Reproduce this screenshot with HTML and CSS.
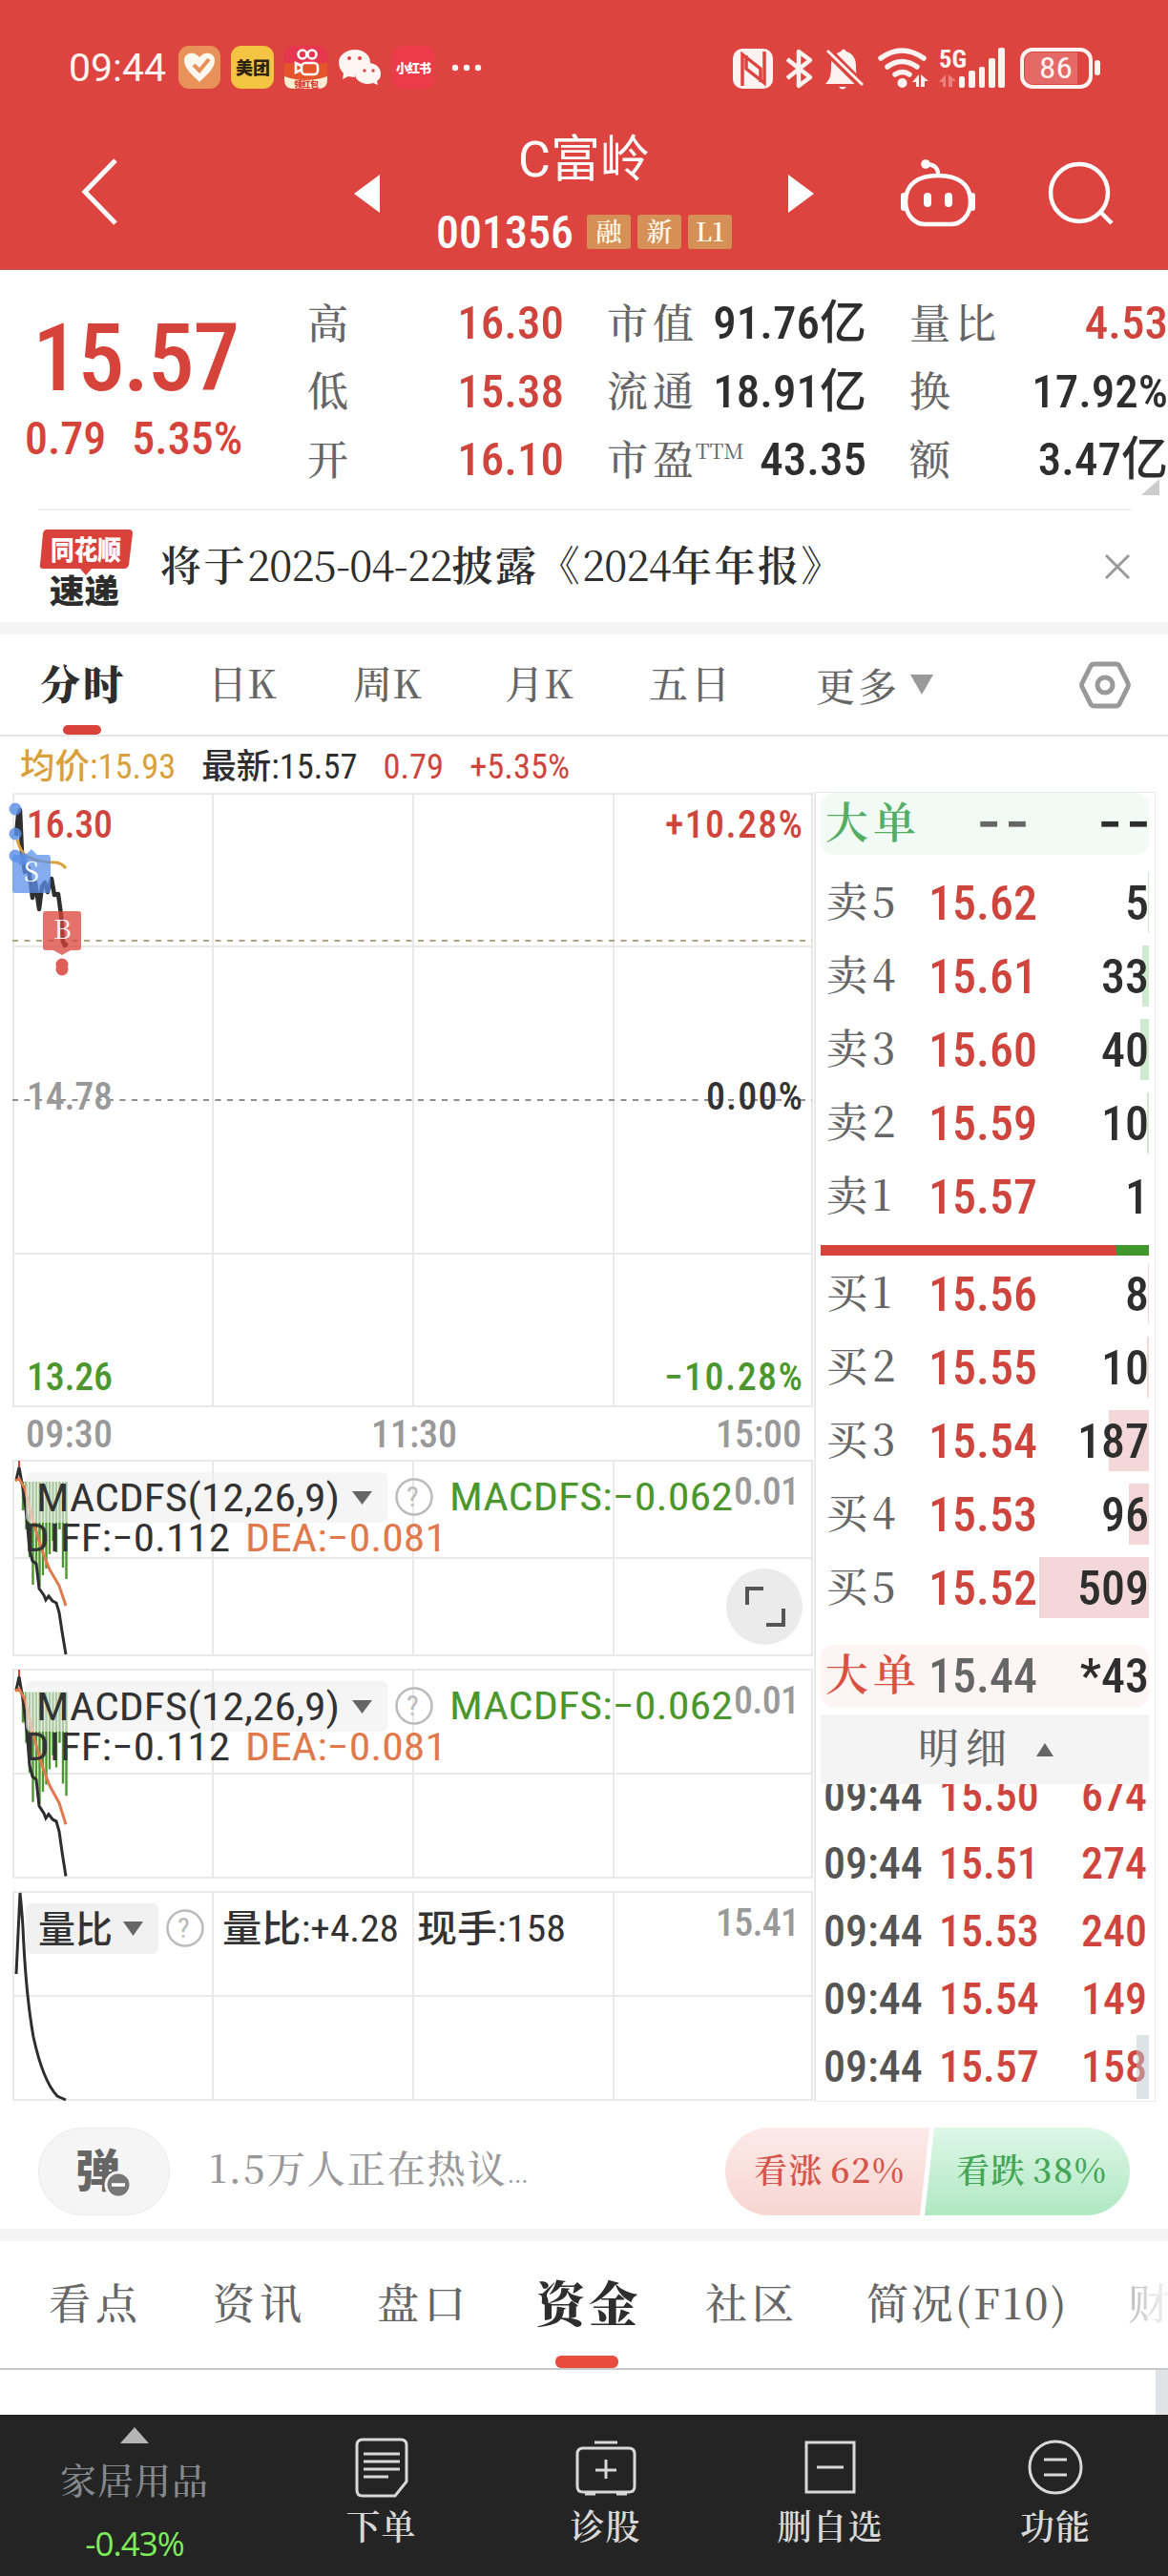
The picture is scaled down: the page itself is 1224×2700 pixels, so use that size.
FILE: index.html
```
<!DOCTYPE html>
<html lang="zh-CN">
<head>
<meta charset="utf-8">
<title>C富岭 001356</title>
<link rel="stylesheet" href="styles.css">
</head>
<body>
<div class="app">
<header class="header">
  <div class="status">
    <span class="clock">09:44</span>
    <svg class="status-apps" viewBox="186 44 322 54" width="322" height="54">
      <rect x="187" y="48" width="44" height="45" rx="11" fill="#e8925a"/>
      <path d="M209 86c-8-8-16-14-16-23 0-8 11-10 16-3 5-7 16-5 16 3 0 9-8 15-16 23z" fill="#fff8ee"/>
      <path d="M203 68l6 6 10-12" fill="none" stroke="#e8925a" stroke-width="4"/>
      <rect x="242" y="48" width="45" height="45" rx="11" fill="#f4c443"/>
      <text x="247" y="78" class="app-name" fill="#2c2410" font-size="18" textLength="36">美团</text>
      <rect x="298" y="48" width="45" height="45" rx="11" fill="#e63650"/>
      <rect x="298" y="66" width="45" height="18" fill="#e4552c"/>
      <path d="M298 80q22 8 45 0v4q0 9-10 9h-25q-10 0-10-9z" fill="#fdeed2"/>
      <g fill="none" stroke="#fff" stroke-width="2.6"><circle cx="317" cy="57" r="4.5"/><circle cx="327" cy="57" r="4.5"/><rect x="316" y="66" width="17" height="12" rx="4"/><path d="M316 69l-6-3v10l6-3"/></g>
      <text x="308" y="92" class="app-name" fill="#d8362e" font-size="9" textLength="26">领红包</text>
      <g fill="#fff5f3"><path d="M372 52c9 0 16 6 16 13v1c-9 0-17 6-16 15-3 0-5-1-7-1l-6 3 1-6c-3-3-5-7-5-12 0-7 8-13 17-13z"/><path d="M386 66c8 0 13 5 13 11 0 4-1 6-4 8l1 4-5-2c-10 3-19-2-19-10 0-6 6-11 14-11z"/></g>
      <g fill="#dd4440"><circle cx="366" cy="61" r="2"/><circle cx="377" cy="61" r="2"/><circle cx="382" cy="74" r="1.7"/><circle cx="391" cy="74" r="1.7"/></g>
      <rect x="411" y="48" width="45" height="45" rx="11" fill="#ec3c49"/>
      <text x="415" y="76" class="app-name" fill="#fff" font-size="13" textLength="37">小红书</text>
      <g fill="#fff5f3"><circle cx="477" cy="71" r="3.2"/><circle cx="489" cy="71" r="3.2"/><circle cx="501" cy="71" r="3.2"/></g>
    </svg>
    <svg class="status-sys" viewBox="766 44 390 54" width="390" height="54" fill="#fff3f2">
      <rect x="768" y="51" width="42" height="42" rx="10"/>
      <path d="M778 90V57l19 15v14M801 54v33l-19-15V58" fill="none" stroke="#dd4440" stroke-width="3.500"/>
      <path d="M825 62l24 19-12 9V54l12 9-24 19" fill="none" stroke="#fff3f2" stroke-width="4.5" stroke-linejoin="round"/>
      <path d="M865 88c5-5 6-9 6-20 0-9 5-12 10-14q3-5 6 0c7 2 10 8 10 15 0 9 1 14 5 19z"/><path d="M879 91h8q-4 5-8 0"/>
      <path d="M865 51l41 41" stroke="#dd4440" stroke-width="9"/><path d="M867 53l37 36" stroke="#fff3f2" stroke-width="3"/>
      <g fill="none" stroke="#fff3f2" stroke-width="5.5" stroke-linecap="round"><path d="M923 61q22-16 45 0M930 70q15-11 31 0M938 78q8-5 15 0"/></g>
      <circle cx="945.500" cy="87" r="5"/>
      <path d="M956 86l7-8v13h-3v-5zM965 78l8 7h-4v6h-4z"/>
      <text x="984" y="71" font-size="26" class="net" textLength="29" lengthAdjust="spacingAndGlyphs">5G</text>
      <path d="M984 86l7-8v13h-3v-5zM994 78l8 7h-4v6h-4z" opacity=".35"/>
      <rect x="1005" y="80" width="6" height="12" rx="2"/><rect x="1015" y="74" width="7" height="18" rx="2"/><rect x="1026" y="70" width="6" height="22" rx="2"/><rect x="1036" y="61" width="7" height="31" rx="2"/><rect x="1046" y="50" width="7" height="42" rx="2"/>
      <rect x="1071" y="52" width="72" height="39" rx="11" fill="none" stroke="#fff3f2" stroke-width="4"/>
      <path d="M1083 55h46v33h-46q-9 0-9-9V64q0-9 9-9z" opacity=".22"/>
      <rect x="1147" y="63" width="6" height="16" rx="3"/>
      <text x="1089" y="82" font-size="32" class="net2" textLength="35" lengthAdjust="spacingAndGlyphs">86</text>
    </svg>
  </div>
  <nav class="nav">
    <svg class="back" viewBox="0 0 42 72" width="42" height="72"><path d="M37 3L5 36l32 33" fill="none" stroke="#fff" stroke-width="5"/></svg>
    <svg class="prev" viewBox="0 0 27 40" width="27" height="40"><path d="M27 0v40L0 20z" fill="#fff"/></svg>
    <div class="stock">
      <div class="stock-name">C富岭</div>
      <div class="stock-code"><span class="code">001356</span><span class="tag">融</span><span class="tag">新</span><span class="tag">L1</span></div>
    </div>
    <svg class="next" viewBox="0 0 27 40" width="27" height="40"><path d="M0 0v40l27-20z" fill="#fff"/></svg>
    <svg class="robot" viewBox="943 165 78 74" width="78" height="74" fill="none" stroke="#fff">
      <path d="M982 184c21 0 34 9 34 27 0 15-10 24-20 24h-28c-10 0-20-9-20-24 0-18 13-27 34-27z" stroke-width="4.500"/>
      <path d="M946 205v13M1018 205v13" stroke-width="6" stroke-linecap="round"/>
      <path d="M982 184q1-11-12-12" stroke-width="4.500"/><circle cx="969" cy="172" r="4.800" fill="#fff" stroke="none"/>
      <path d="M971 206v7M993 206v7" stroke-width="8" stroke-linecap="round"/>
    </svg>
    <svg class="search" viewBox="1096 168 70 70" width="70" height="70" fill="none" stroke="#fff" stroke-width="4.500"><circle cx="1129" cy="202" r="30"/><path d="M1151 222l12 12"/></svg>
  </nav>
</header>

<section class="quote">
  <div class="price-box"><div class="price">15.57</div><div class="change"><span>0.79</span><span>5.35%</span></div></div>
  <div class="stats">
    <div class="stat"><label>高</label><b class="up">16.30</b></div><div class="stat"><label>市值</label><b>91.76亿</b></div><div class="stat"><label>量比</label><b class="up">4.53</b></div>
    <div class="stat"><label>低</label><b class="up">15.38</b></div><div class="stat"><label>流通</label><b>18.91亿</b></div><div class="stat"><label>换</label><b>17.92%</b></div>
    <div class="stat"><label>开</label><b class="up">16.10</b></div><div class="stat"><label>市盈<sup>TTM</sup></label><b>43.35</b></div><div class="stat"><label>额</label><b>3.47亿</b></div>
  </div>
  <svg class="corner" viewBox="0 0 19 17" width="19" height="17"><path d="M19 0v17H0z" fill="#ccc"/></svg>
</section>

<section class="news">
  <svg viewBox="40 548 100 86" width="100" height="86">
    <path d="M49 552h86q4 0 4 4l-4 33q-1 4-5 4H96l-6 7-6-7H45q-4 0-3-4l3-33q1-4 4-4z" fill="#d9423b"/>
    <text class="logo" x="53" y="584" font-size="28" fill="#fff" textLength="74" lengthAdjust="spacingAndGlyphs">同花顺</text>
    <text class="logo" x="52" y="629" font-size="34" fill="#2c2c2c" textLength="73" lengthAdjust="spacingAndGlyphs">速递</text>
  </svg>
  <p class="news-text">将于<i>2025-04-22</i>披露《<i>2024</i>年年报》</p>
  <svg class="close" viewBox="0 0 28 28" width="28" height="28"><path d="M2 2l24 24M26 2L2 26" stroke="#999" stroke-width="3"/></svg>
</section>

<div class="band"></div>

<nav class="periods">
  <span class="active">分时</span><span>日K</span><span>周K</span><span>月K</span><span>五日</span><span class="more">更多<svg viewBox="0 0 24 21" width="24" height="21"><path d="M0 0h24L12 21z" fill="#999"/></svg></span>
  <svg class="hex" viewBox="-30 -28 60 56" width="60" height="56" fill="none" stroke="#999" stroke-width="5" stroke-linejoin="round"><path d="M-11-22h22q3 0 4 2l9 18q1 2 0 4l-9 18q-1 2-4 2h-22q-3 0-4-2l-9-18q-1-2 0-4l9-18q1-2 4-2z"/><circle r="8"/></svg>
</nav>

<div class="legend"><span class="avg">均价:15.93</span><span class="last">最新:15.57</span><span class="up">0.79</span><span class="up">+5.35%</span></div>

<main class="board">
  <div class="charts">
    <svg viewBox="0 830 853 698" width="853" height="698">
      <path class="grid" d="M13 832H852M13 992H852M13 1314H852M13 1474H852M14 832V1474M223 832V1474M433 832V1474M643 832V1474M851 832V1474"/>
      <path d="M13 986H851" stroke="#b3a684" stroke-width="2" stroke-dasharray="6 6.500"/>
      <path d="M13 1153H851" stroke="#8f8f8f" stroke-width="2" stroke-dasharray="6 6.500"/>
      <path d="M17 876l2-22 2-5 2 45 3 20 4-4 4 31 3-16 4 28 3-24 3-4 3 10 4-14 3 17 4-1 3 22 2 28 2 4 2-3" fill="none" stroke="#2e2e2e" stroke-width="4.500" stroke-linejoin="round"/>
      <path d="M18 880q3 13 11 18 12 6 30 6 6 1 10 6" fill="none" stroke="#d9a03c" stroke-width="3"/>
      <g fill="#5b90e8" opacity=".82"><circle cx="16" cy="848" r="6.500"/><circle cx="16" cy="874" r="6.500"/><circle cx="16" cy="897" r="6.500"/><circle cx="23" cy="900" r="6.500"/></g>
      <path d="M16 896h11l6-6 6 6h11q3 0 3 3v34q0 3-3 3H16q-3 0-3-3v-34q0-3 3-3z" fill="#5b90e8" opacity=".75"/>
      <path d="M48 955h34q3 0 3 3v35q0 3-3 3H74l-9 5-9-5h-8q-3 0-3-3v-35q0-3 3-3z" fill="#d9423b" opacity=".75"/>
      <g fill="#d9423b" opacity=".85"><circle cx="65" cy="1011" r="6.500"/><circle cx="65" cy="1016" r="6.500"/></g>
      <text class="serif" x="25" y="924" font-size="28" fill="#fff">S</text><text class="serif" x="56" y="984" font-size="28" fill="#fff">B</text>
      <text class="n up" x="28" y="878" textLength="90">16.30</text>
      <text class="n g" x="28" y="1163" textLength="90">14.78</text>
      <text class="n down" x="28" y="1457" textLength="90">13.26</text>
      <text class="n up" x="697" y="878" textLength="144">+10.28%</text>
      <text class="n dk" x="740" y="1163" textLength="101">0.00%</text>
      <text class="n down" x="696" y="1457" textLength="145">−10.28%</text>
      <text class="n g" x="27" y="1517" textLength="91">09:30</text><text class="n g" x="389" y="1517" textLength="90">11:30</text><text class="n g" x="750" y="1517" textLength="90">15:00</text>
    </svg>
    <svg viewBox="0 1528 853 219" width="853" height="219">
      <path class="grid" d="M13 1531H852M13 1633H852M13 1735H852M14 1531V1735M223 1531V1735M433 1531V1735M643 1531V1735M851 1531V1735"/>
      <g id="macd">
        <path d="M24 1553v30M27.500 1553v50M31 1553v79M34.500 1553v108M38 1553v90M41.500 1553v110M45 1553v98M48.500 1553v91M52 1553v76M55.500 1553v62M59 1553v74M62.500 1553v50M66 1553v90M69.500 1553v102" stroke="#4b972e" stroke-width="2.400"/>
        <path d="M20 1531v9" stroke="#d9423b" stroke-width="2"/>
        <path d="M17 1551l3-13 4 22 4 30 3 35 3 11 4 3 3 26 5 7 2 5 3-4 4 5 4 2 3 10 3 20 4 24" fill="none" stroke="#2e2e2e" stroke-width="3"/>
        <path d="M16 1552l4-2 6 10 8 32 10 33 8 20 10 17 7 21" fill="none" stroke="#e07a4c" stroke-width="3"/>
      </g>
      <g id="readout">
        <rect x="27" y="1543" width="379" height="53" rx="6" fill="#eee" opacity=".6"/>
        <text class="n dk m" x="38" y="1584" textLength="318" lengthAdjust="spacingAndGlyphs">MACDFS(12,26,9)</text>
        <path d="M369 1563h21l-10.500 14z" fill="#666"/>
        <circle cx="434" cy="1569" r="18.500" fill="none" stroke="#bbb" stroke-width="2.500"/><text class="n q" x="426" y="1579">?</text>
        <text class="n down m" x="471" y="1583" textLength="297" lengthAdjust="spacingAndGlyphs">MACDFS:−0.062</text>
        <text class="n g" x="769" y="1577" textLength="69">0.01</text>
        <text class="n dk m" x="26" y="1626" textLength="215" lengthAdjust="spacingAndGlyphs">DIFF:−0.112</text>
        <text class="n or m" x="257" y="1626" textLength="211" lengthAdjust="spacingAndGlyphs">DEA:−0.081</text>
      </g>
      <circle cx="801" cy="1684" r="40" fill="#ebebeb"/><path d="M783 1682v-17h17M821 1686v17h-18" fill="none" stroke="#555" stroke-width="4"/>
    </svg>
    <svg viewBox="0 1747 853 233" width="853" height="233">
      <path class="grid" d="M13 1750H852M13 1859H852M13 1968H852M14 1750V1968M223 1750V1968M433 1750V1968M643 1750V1968M851 1750V1968"/>
      <use href="#macd" transform="translate(0 117.500) scale(1 1.067)" y="-1"/>
      <use href="#readout" y="219"/>
    </svg>
    <svg viewBox="0 1980 853 223" width="853" height="223">
      <path class="grid" d="M13 1983H852M13 2092H852M13 2201H852M14 1983V2201M223 1983V2201M433 1983V2201M643 1983V2201M851 1983V2201"/>
      <path d="M17 2069l4-85q2 20 3 36 3 70 11 115 10 46 25 62l9 4" fill="none" stroke="#2e2e2e" stroke-width="3"/>
      <rect x="27" y="1995" width="139" height="53" rx="6" fill="#eee" opacity=".8"/>
      <text class="n dk b" x="40" y="2036" textLength="78">量比</text><path d="M129 2014h21l-10.500 15z" fill="#666"/>
      <circle cx="194" cy="2021" r="18.500" fill="none" stroke="#bbb" stroke-width="2.500"/><text class="n q" x="186" y="2031">?</text>
      <text class="n dk b" x="233" y="2035" textLength="185" lengthAdjust="spacingAndGlyphs">量比:+4.28</text><text class="n dk b" x="437" y="2035" textLength="156" lengthAdjust="spacingAndGlyphs">现手:158</text>
      <text class="n g" x="750" y="2029" textLength="88">15.41</text>
    </svg>
  </div>

  <aside class="book">
    <div class="big sell"><span class="t">大单</span><span class="p">− −</span><span class="v">− −</span></div>
    <div class="levels">
      <div class="lv"><span class="t">卖5</span><span class="p">15.62</span><span class="v">5</span><i class="bar s" style="width:1px"></i></div>
      <div class="lv"><span class="t">卖4</span><span class="p">15.61</span><span class="v">33</span><i class="bar s" style="width:7px"></i></div>
      <div class="lv"><span class="t">卖3</span><span class="p">15.60</span><span class="v">40</span><i class="bar s" style="width:9px"></i></div>
      <div class="lv"><span class="t">卖2</span><span class="p">15.59</span><span class="v">10</span><i class="bar s" style="width:2px"></i></div>
      <div class="lv"><span class="t">卖1</span><span class="p">15.57</span><span class="v">1</span></div>
    </div>
    <div class="ratio"><i style="width:90%"></i></div>
    <div class="levels">
      <div class="lv"><span class="t">买1</span><span class="p">15.56</span><span class="v">8</span><i class="bar y" style="width:1px"></i></div>
      <div class="lv"><span class="t">买2</span><span class="p">15.55</span><span class="v">10</span><i class="bar y" style="width:2px"></i></div>
      <div class="lv"><span class="t">买3</span><span class="p">15.54</span><span class="v">187</span><i class="bar y" style="width:42px"></i></div>
      <div class="lv"><span class="t">买4</span><span class="p">15.53</span><span class="v">96</span><i class="bar y" style="width:21px"></i></div>
      <div class="lv"><span class="t">买5</span><span class="p">15.52</span><span class="v">509</span><i class="bar y" style="width:115px"></i></div>
    </div>
    <div class="big buy"><span class="t">大单</span><span class="p">15.44</span><span class="v">*43</span></div>
    <div class="detail"><span>明细</span><svg viewBox="0 0 18 14" width="18" height="14"><path d="M9 0l9 14H0z" fill="#666"/></svg></div>
    <div class="ticks">
      <div><span>09:44</span><b>15.50</b><em>674</em></div>
      <div><span>09:44</span><b>15.51</b><em>274</em></div>
      <div><span>09:44</span><b>15.53</b><em>240</em></div>
      <div><span>09:44</span><b>15.54</b><em>149</em></div>
      <div><span>09:44</span><b>15.57</b><em>158</em></div>
      <i class="thumb"></i>
    </div>
  </aside>
</main>

<section class="talk">
  <div class="danmu"><svg viewBox="0 0 68 60" width="68" height="60"><text class="heavy" x="7" y="46" font-size="47" fill="#666">弹</text><circle cx="52" cy="44" r="13" fill="#777" stroke="#f5f5f5" stroke-width="3"/><path d="M45 44h14" stroke="#fff" stroke-width="3.500"/></svg></div>
  <p>1.5万人正在热议<small>...</small></p>
  <div class="vote">
    <svg viewBox="0 0 424 92" width="424" height="92">
      <defs><linearGradient id="r" x2="0" y2="1"><stop stop-color="#fbeae8"/><stop offset="1" stop-color="#f8d6d1"/></linearGradient><linearGradient id="gr" x2="0" y2="1"><stop stop-color="#def7e7"/><stop offset="1" stop-color="#afe8c2"/></linearGradient></defs>
      <path d="M46 0h168l-10 92H46a46 46 0 010-92z" fill="url(#r)"/><path d="M219 0h159a46 46 0 010 92H209z" fill="url(#gr)"/>
    </svg>
    <span class="bull">看涨 62%</span><span class="bear">看跌 38%</span>
  </div>
</section>

<div class="band"></div>

<nav class="tabs"><span>看点</span><span>资讯</span><span>盘口</span><span class="active">资金</span><span>社区</span><span>简况(F10)</span><span class="fade">财</span></nav>
<div class="page"><i></i></div>

<footer class="dock">
  <div class="index"><svg viewBox="0 0 30 17" width="30" height="17"><path d="M15 0l15 17H0z" fill="#b5b5b5"/></svg><span class="ix-name">家居用品</span><span class="ix-val">-0.43%</span></div>
  <div class="act"><svg viewBox="-35 -33 70 66" width="70" height="66"><path d="M-20-29h40q6 0 6 6v38l-12 15h-34q-6 0-6-6v-47q0-6 6-6zM-19-14h38M-19-6h38M-19 2h38M-19 10h26"/></svg><span>下单</span></div>
  <div class="act"><svg viewBox="-35 -33 70 66" width="70" height="66"><path d="M-12-26h24M-24-20h48q6 0 6 6v34q0 6-6 6h-48q-6 0-6-6v-34q0-6 6-6zM0-8v20M-11 3h22M-22 28h11M11 28h11"/></svg><span>诊股</span></div>
  <div class="act"><svg viewBox="-35 -33 70 66" width="70" height="66"><path d="M-25-26h50v52h-50zM-14 0h28"/></svg><span>删自选</span></div>
  <div class="act"><svg viewBox="-35 -33 70 66" width="70" height="66"><circle r="27"/><path d="M-12-8h24M-12 8h24"/></svg><span>功能</span></div>
</footer>
</div>
</body>
</html>
```
FILE: styles.css
```
* { box-sizing: border-box; }
body { margin: 0; background: #fff; color: #2e2e2e; font-family: "Noto Serif CJK SC", "Noto Sans CJK SC", serif; }
p { margin: 0; }
svg { display: block; flex: none; }
i, em { font-style: normal; }
.app { width: 1224px; height: 2700px; overflow: hidden; }
.up { color: #cf453d; fill: #cf453d; }
.header { height: 283px; background: #dd4440; color: #fff; border-bottom: 1px solid #c4504b; }
.clock, .stock-name, .code, .price, .change, .stat b, .legend, .n, .book .p, .book .v, .ticks, .net, .net2 { font-family: Roboto, "Noto Sans CJK SC", sans-serif; font-stretch: 82%; font-weight: 500; }

.status { height: 130px; padding: 12px 68px 0 72px; display: flex; align-items: center; }
.clock { font-size: 41px; font-weight: 400; width: 114px; font-stretch: 95%; color: #fff3f2; }
.status-sys { margin-left: auto; }
.app-name, .logo { font-family: "Noto Sans CJK SC", sans-serif; font-weight: 900; }
.net { font-weight: 700; }
.net2 { font-weight: 400; }

.nav { height: 152px; display: flex; align-items: center; padding-left: 84px; }
.back { margin: -10px 245px 0 0; }
.prev, .next, .search { margin-top: -6px; }
.stock { width: 428px; }
.stock-name, .stock-code { height: 76px; line-height: 76px; display: flex; justify-content: center; }
.stock-name { font-size: 52px; font-weight: 400; font-stretch: 92%; }
.stock-code { align-items: center; gap: 7px; }
.code { font-size: 48px; margin-right: 7px; font-stretch: 78%; }
.tag { width: 46px; height: 36px; line-height: 34px; margin-top: -3px; border-radius: 3px; background: #d68f55; color: #fff7e8; font-size: 27px; text-align: center; font-weight: 600; }
.robot { margin: -8px 76px 0 91px; }

.quote { position: relative; height: 250px; display: flex; padding-top: 20px; }
.price-box { width: 322px; color: #d5433b; }
.price { height: 112px; line-height: 146px; padding-left: 34px; font-size: 98px; letter-spacing: -1.500px; }
.change { display: flex; gap: 27px; padding-left: 26px; font-size: 48px; line-height: 90px; font-weight: 500; font-stretch: 84%; }
.stats { flex: 1; display: grid; grid-template-columns: 269px 272px 271px; column-gap: 45px; grid-auto-rows: 71.500px; }
.stat { display: flex; justify-content: space-between; align-items: center; white-space: nowrap; line-height: 71px; }
.stat label { font-size: 43px; letter-spacing: 5px; color: #666; margin-top: -5px; font-weight: 500; }
.stat sup { font-size: 22px; letter-spacing: 0; vertical-align: 17px; line-height: 0; margin-left: -3px; font-weight: 400; }
.stat b { font-size: 49px; }
.corner { position: absolute; left: 1196px; top: 219px; }

.news { height: 119px; margin: 0 39px 0 40px; border-top: 2px solid #eee; display: flex; align-items: center; }
.news-text { font-size: 43px; letter-spacing: 2.500px; margin: -6px 0 0 28px; line-height: 60px; font-weight: 600; white-space: nowrap; }
.news-text i { font-size: 43px; letter-spacing: -0.700px; font-weight: 400; }
.close { margin-left: auto; }
.band { height: 13px; background: #f4f4f4; }

.periods { height: 107px; display: flex; align-items: center; padding-left: 42px; font-size: 41px; letter-spacing: 3px; color: #666; border-bottom: 2px solid #e6e6e6; font-weight: 500; }
.periods > span { height: 105px; line-height: 100px; white-space: nowrap; }
.periods > span:nth-child(1) { width: 176px; }
.periods > span:nth-child(2) { width: 152px; letter-spacing: 0; }
.periods > span:nth-child(3) { width: 159px; letter-spacing: 0; }
.periods > span:nth-child(4) { width: 151px; letter-spacing: 0; }
.periods > span:nth-child(5) { width: 175px; }
.periods .active { color: #2e2e2e; font-weight: 900; position: relative; font-size: 42px; }
.periods .active::after { content: ""; position: absolute; left: 24px; bottom: 0; width: 40px; height: 10px; border-radius: 5px; background: #d9423b; }
.more { display: flex; align-items: center; gap: 11px; }
.hex { margin: 0 0 0 150px; }

.legend { height: 58px; line-height: 64px; display: flex; gap: 27px; padding-left: 21px; font-size: 36.500px; font-stretch: 87%; white-space: nowrap; font-weight: 450; }
.legend .avg { color: #d9a03c; }

.board { display: grid; grid-template-columns: 853px 358px; height: 1373px; }
.grid { fill: none; stroke: #e9e9e9; stroke-width: 2; }
.n { font-size: 40px; }
.g { fill: #999; }
.dk { fill: #333; }
.down { fill: #4b972e; }
.or { fill: #e07a4c; }
.m { font-size: 41px; font-weight: 450; }
.b { font-size: 39px; font-weight: 450; }
.q { font-size: 30px; fill: #bbb; font-weight: 400; }
.serif { font-family: "Noto Serif CJK SC", serif; }

.book { border: 1px solid #e9e9e9; border-left-width: 2px; padding: 0 6px 0 5px; }
.big, .lv { display: grid; grid-template-columns: 113px 111px 1fr; align-items: center; white-space: nowrap; padding-right: 0; }
.big { height: 65px; border-radius: 14px; }
.big .t { padding-left: 5px; font-size: 45px; letter-spacing: 5px; line-height: 60px; font-weight: 600; margin-top: -7px; }
.sell { background: #f2faf6; color: #53ad62; }
.sell .p, .sell .v { letter-spacing: -1px; text-align: right; font-weight: 700; word-spacing: -4px; }
.buy { background: #fdf4f4; color: #d9523f; margin-top: 21px; }
.big .p { color: #666; }
.big .v { color: #2e2e2e; }
.book .p { font-size: 50px; font-stretch: 78%; }
.book .v { font-size: 50px; text-align: right; font-stretch: 84%; position: relative; z-index: 1; }
.book .sell .p { padding-right: 7px; }
.levels { padding-top: 12px; }
.lv { height: 77px; position: relative; }
.lv .t { padding-left: 6px; font-size: 43px; letter-spacing: 5px; color: #666; line-height: 70px; margin-top: -8px; font-weight: 500; }
.lv .p { color: #cf453d; }
.bar { position: absolute; right: 0; top: 6px; height: 64px; }
.bar.s { background: #d0ead0; }
.bar.y { background: #f4d7d8; }
.ratio { height: 11px; margin-top: 12px; background: #43982d; }
.ratio i { display: block; height: 11px; background: #d5433b; }
.ratio + .levels { padding-top: 2px; }
.detail { height: 73px; margin-top: 8px; background: #f4f4f4; display: flex; align-items: center; gap: 24px; padding-left: 102px; font-size: 43px; letter-spacing: 7px; color: #666; line-height: 60px; font-weight: 500; }
.detail span { margin-top: -7px; }
.ticks { position: relative; height: 331px; overflow: hidden; font-size: 46px; }
.ticks div { height: 71px; line-height: 71px; display: grid; grid-template-columns: 121px 105px 1fr; padding: 0 2px 0 3px; color: #555; white-space: nowrap; }
.ticks div:first-child { margin-top: -23px; }
.ticks b, .ticks em { font-weight: 500; color: #cf453d; }
.ticks em { text-align: right; }
.ticks span { font-stretch: 86%; }
.thumb { position: absolute; right: 0; top: 263px; width: 13px; height: 67px; background: rgba(190,199,206,.5); }

.talk { height: 133px; display: flex; align-items: center; padding: 13px 40px 0; }
.danmu { width: 138px; height: 92px; border-radius: 46px; background: #f5f5f5; border: 1px solid #ebebeb; display: flex; align-items: center; padding-left: 31px; }
.heavy { font-family: "Noto Sans CJK SC", sans-serif; font-weight: 900; }
.talk p { margin-left: 41px; font-size: 40px; letter-spacing: 2px; color: #999; line-height: 60px; margin-top: -3px; white-space: nowrap; font-weight: 500; }
.talk small { font-size: 22px; letter-spacing: 0; }
.vote { position: relative; margin-left: auto; width: 424px; height: 92px; }
.vote span { position: absolute; top: 0; line-height: 86px; font-size: 35px; letter-spacing: 1.500px; white-space: nowrap; font-weight: 600; word-spacing: -3px; }
.bull { left: 30px; color: #d5554a; }
.bear { left: 242px; color: #45a657; }

.tabs { height: 135px; border-bottom: 2px solid #c8c8c8; display: flex; padding-left: 51px; font-size: 44px; letter-spacing: 5px; line-height: 126px; color: #666; white-space: nowrap; overflow: hidden; font-weight: 500; }
.tabs span { flex: none; width: 172px; }
.tabs span:nth-child(3) { width: 167px; }
.tabs .active { font-size: 51px; font-weight: 900; color: #2e2e2e; letter-spacing: 4px; width: 177px; position: relative; }
.tabs .active::after { content: ""; position: absolute; left: 20px; bottom: 0; width: 66px; height: 13px; border-radius: 6px; background: #e74c3c; }
.tabs span:nth-child(5) { width: 169px; }
.tabs span:nth-child(6) { width: 274px; letter-spacing: 2.500px; }
.tabs .fade { background: linear-gradient(90deg, #bbb, #f4f4f4 41px); -webkit-background-clip: text; background-clip: text; color: transparent; }
.page { height: 47px; display: flex; justify-content: flex-end; }
.page i { width: 13px; background: #dfe3e6; }

.dock { height: 169px; background: #242424; color: #d8d8d8; display: grid; grid-template-columns: 282px 235px 235px 236px 236px; font-size: 36px; white-space: nowrap; }
.index { display: flex; flex-direction: column; align-items: center; padding-top: 13px; }
.ix-name { font-size: 38px; line-height: 60px; margin-top: 7px; color: #84898d; letter-spacing: 1px; font-weight: 500; }
.ix-val { font-size: 35px; line-height: 60px; margin-top: 8px; color: #7eec5b; font-family: "Open Sans", sans-serif; font-stretch: 93%; letter-spacing: -1px; }
.act { display: flex; flex-direction: column; align-items: center; padding-top: 22px; }
.act svg { fill: none; stroke: #d8d8d8; stroke-width: 3; }
.act span { line-height: 56px; letter-spacing: 1px; margin-top: 0; font-weight: 600; }
```
